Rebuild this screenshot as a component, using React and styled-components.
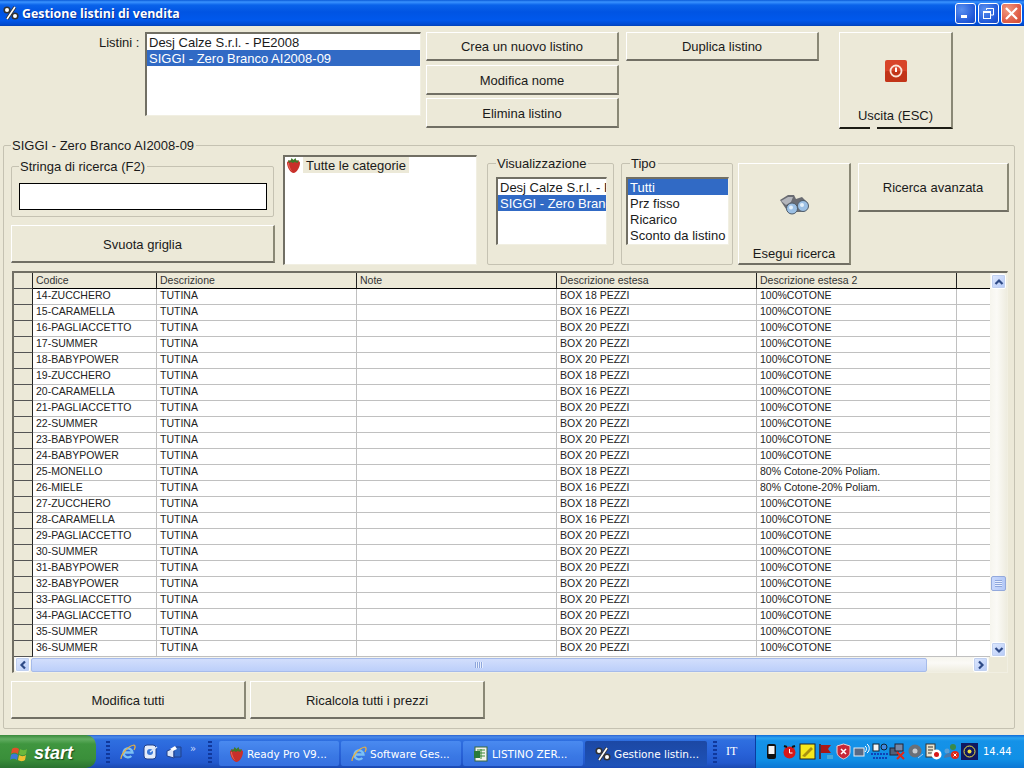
import styled, { createGlobalStyle } from "styled-components";

const GlobalStyle = createGlobalStyle`
  html, body {
    margin: 0;
    background: #ece9d8;
  }
  * {
    box-sizing: border-box;
  }
`;

const Win = styled.div`
  display: flex;
  flex-direction: column;
  width: 1024px;
  height: 768px;
  overflow: hidden;
  background: #ece9d8;
  color: #1a1a1a;
  font-family: "Liberation Sans", Arial, sans-serif;
  font-size: 13px;
`;

const TitleBar = styled.div`
  display: flex;
  align-items: center;
  height: 26px;
  flex: none;
  padding: 0 2px 0 3px;
  background: linear-gradient(
    180deg,
    #0a5ad8 0,
    #3a93ff 2px,
    #0a63ea 5px,
    #0054e3 12px,
    #0058ec 20px,
    #0048cc 25px,
    #0040b0 26px
  );
`;

const TitleText = styled.span`
  margin-left: 3px;
  flex: 1;
  color: #fff;
  font-family: "Open Sans", sans-serif;
  font-size: 12.4px;
  font-weight: 700;
  text-shadow: 1px 1px 0 #0a2f90;
`;

const CaptionButton = styled.div`
  display: flex;
  align-items: center;
  justify-content: center;
  width: 21px;
  height: 21px;
  margin-left: 2px;
  border: 1px solid #fff;
  border-radius: 3px;
  background: ${(p) =>
    p.$close
      ? "radial-gradient(circle at 30% 30%, #f09a80, #e0604a 60%, #d04a30)"
      : "radial-gradient(circle at 30% 30%, #5a90f0, #2058d8 70%, #1848c0)"};
`;

const TopRow = styled.div`
  display: flex;
  flex: none;
  align-items: flex-start;
  height: 112px;
  padding: 6px 0 0 99px;
`;

const TopLabel = styled.div`
  width: 46px;
  margin-top: 1px;
  line-height: 20px;
`;

const ListBox = styled.div`
  flex: none;
  width: ${(p) => p.$w}px;
  height: ${(p) => p.$h}px;
  overflow: hidden;
  background: #fff;
  border-top: 2px solid #716f64;
  border-left: 2px solid #716f64;
  border-right: 1px solid #f1efe2;
  border-bottom: 1px solid #f1efe2;
`;

const ListItem = styled.div`
  height: 16px;
  padding-left: 2px;
  line-height: 18px;
  overflow: hidden;
  white-space: nowrap;
  color: ${(p) => (p.$selected ? "#fff" : "#1a1a1a")};
  background: ${(p) => (p.$selected ? "#316ac5" : "transparent")};
`;

const Button = styled.div`
  position: relative;
  display: flex;
  flex: none;
  align-items: center;
  justify-content: center;
  width: ${(p) => p.$w}px;
  height: ${(p) => p.$h}px;
  margin-top: ${(p) => p.$top || 0}px;
  margin-left: ${(p) => p.$left || 0}px;
  padding-top: ${(p) => (p.$low ? 2 : 0)}px;
  background: #ece9d8;
  border-top: 1px solid #fff;
  border-left: 1px solid #fff;
  border-right: 2px solid #8a8876;
  border-bottom: 2px solid #716f64;
`;

const ButtonColumn = styled.div`
  display: flex;
  flex-direction: column;
  margin: 0 7px 0 5px;
`;

const TallButton = styled(Button)`
  flex-direction: column;
  justify-content: flex-end;
  padding-bottom: ${(p) => p.$bottom}px;
  border-bottom-color: ${(p) => (p.$default ? "#1c1c14" : "#716f64")};
`;

const TallIcon = styled.div`
  display: flex;
  flex: 1;
  align-items: center;
  justify-content: center;
`;

const Notch = styled.span`
  position: absolute;
  left: 30px;
  bottom: -2px;
  width: 7px;
  height: 2px;
  background: #ece9d8;
`;

const Group = styled.fieldset`
  flex: none;
  min-width: 0;
  margin: ${(p) => p.$margin || 0};
  padding: ${(p) => p.$padding || 0};
  height: ${(p) => p.$h}px;
  width: ${(p) => p.$w}px;
  border: 1px solid #c5c2b2;
  border-radius: 2px;
`;

const GroupTitle = styled.legend`
  margin-left: ${(p) => p.$left}px;
  padding: 0 2px 0 1px;
  line-height: 15px;
  height: 15px;
  white-space: nowrap;
`;

const FilterRow = styled.div`
  display: flex;
  height: 110px;
  margin-top: 2px;
`;

const SearchColumn = styled.div`
  display: flex;
  flex: none;
  flex-direction: column;
  width: 264px;
`;

const SearchInput = styled.div`
  width: 248px;
  height: 27px;
  margin-top: 9px;
  background: #fff;
  border: 1px solid #000;
`;

const TreeBox = styled.div`
  flex: none;
  width: 194px;
  height: 110px;
  margin-left: 8px;
  padding-left: 1px;
  background: #fff;
  border-top: 2px solid #716f64;
  border-left: 2px solid #716f64;
  border-right: 1px solid #f1efe2;
  border-bottom: 1px solid #f1efe2;
`;

const TreeItem = styled.div`
  display: flex;
  align-items: center;
  height: 16px;
`;

const TreeLabel = styled.span`
  margin-left: 2px;
  padding: 1px 3px 0;
  height: 16px;
  line-height: 16px;
  background: #ece9d8;
`;

const GridFrame = styled.div`
  display: flex;
  flex-direction: column;
  width: 996px;
  height: 402px;
  margin: 6px 0 0 1px;
  background: #fff;
  border-top: 2px solid #716f64;
  border-left: 2px solid #716f64;
  border-right: 1px solid #f1efe2;
  border-bottom: 1px solid #f1efe2;
`;

const GridBody = styled.div`
  display: flex;
  height: 385px;
`;

const Table = styled.div`
  flex: 1;
  min-width: 0;
  overflow: hidden;
`;

const Row = styled.div`
  display: grid;
  grid-template-columns: 19px 124px 200px 200px 200px 200px 34px;
  height: 16px;
  font-size: 10.5px;
  line-height: 14px;
  color: #222;
`;

const RowMark = styled.div`
  background: #ece9d8;
  border-right: 1px solid #222;
  border-bottom: 1px solid #555;
`;

const HeadCell = styled.div`
  padding-left: 3px;
  background: #ece9d8;
  color: #333;
  white-space: nowrap;
  border-right: 1px solid #222;
  border-bottom: 1px solid #000;
`;

const Cell = styled.div`
  padding-left: 3px;
  line-height: 12px;
  white-space: nowrap;
  overflow: hidden;
  border-right: 1px solid #c0c0c0;
  border-bottom: 1px solid #c0c0c0;
`;

const VScroll = styled.div`
  display: flex;
  flex: none;
  flex-direction: column;
  justify-content: space-between;
  position: relative;
  width: 17px;
  padding-top: 1px;
  background: linear-gradient(90deg, #f6f5ee, #fbfaf6 40%, #eeecdf);
`;

const ScrollArrow = styled.div`
  display: flex;
  flex: none;
  align-items: center;
  justify-content: center;
  width: 15px;
  height: 15px;
  margin: 0 1px;
  background: linear-gradient(135deg, #dfe9fe, #b6caf7);
  border: 1px solid #fff;
  border-radius: 2px;
  box-shadow: 0 0 0 1px #c0d0f0 inset;
`;

const VThumb = styled.div`
  position: absolute;
  top: 303px;
  left: 1px;
  display: flex;
  align-items: center;
  justify-content: center;
  width: 15px;
  height: 15px;
  background: linear-gradient(90deg, #c8d8fc, #b4c8f6);
  border: 1px solid #93a9dc;
  border-radius: 2px;
`;

const VGrip = styled.div`
  width: 7px;
  height: 7px;
  background: repeating-linear-gradient(180deg, #8ea6dc 0 1px, #e6eefe 1px 2px);
`;

const HScroll = styled.div`
  display: flex;
  align-items: center;
  height: 15px;
  margin-top: auto;
  background: linear-gradient(180deg, #f6f5ee, #fbfaf6 40%, #eeecdf);
`;

const HThumb = styled.div`
  display: flex;
  align-items: center;
  justify-content: center;
  width: 896px;
  height: 14px;
  background: linear-gradient(180deg, #d2defc, #bccffa);
  border: 1px solid #a6bbea;
  border-radius: 2px;
`;

const Grip = styled.div`
  width: 8px;
  height: 6px;
  background: repeating-linear-gradient(90deg, #8ea6dc 0 1px, #e6eefe 1px 2px);
`;

const HEnd = styled.div`
  flex: 1;
`;

const Corner = styled.div`
  flex: none;
  width: 18px;
  height: 15px;
  background: #ece9d8;
`;

const BottomRow = styled.div`
  display: flex;
  gap: 4px;
  margin-top: 8px;
`;

const Taskbar = styled.div`
  display: flex;
  flex: none;
  align-items: center;
  height: 33px;
  margin-top: auto;
  color: #fff;
  font-family: "DejaVu Sans", sans-serif;
  font-size: 10.5px;
  background: linear-gradient(
    180deg,
    #2a62d0 0,
    #4a8ae8 2px,
    #2f6fe0 5px,
    #2862d8 18px,
    #2258cc 28px,
    #1a48b0 33px
  );
`;

const StartButton = styled.div`
  display: flex;
  flex: none;
  align-items: center;
  gap: 5px;
  align-self: stretch;
  width: 96px;
  padding: 3px 0 0 10px;
  border-radius: 0 10px 10px 0;
  background: linear-gradient(
    180deg,
    #3a8a3c 0,
    #62ad62 4px,
    #3f963f 9px,
    #3a8f3a 24px,
    #2a7230 33px
  );
`;

const StartText = styled.span`
  color: #fff;
  font-family: "Liberation Sans", sans-serif;
  font-size: 18px;
  font-style: italic;
  font-weight: 700;
  text-shadow: 1px 1px 1px #1c4a1c;
`;

const Dots = styled.div`
  flex: none;
  width: 4px;
  height: 24px;
  margin: ${(p) => p.$margin};
  background: repeating-linear-gradient(180deg, #10389c 0 2px, transparent 2px 4px);
`;

const QuickIcons = styled.div`
  display: flex;
  align-items: center;
  gap: 7px;
  width: 88px;
`;

const Chevron = styled.span`
  margin-left: 1px;
  margin-top: -6px;
  font-size: 10px;
  color: #c8d8fa;
`;

const TaskItem = styled.div`
  display: flex;
  flex: none;
  align-items: center;
  gap: 3px;
  width: ${(p) => p.$w}px;
  height: 25px;
  margin: 3px 2px 0 0;
  padding: 2px 0 0 10px;
  border-radius: 2px;
  white-space: nowrap;
  background: ${(p) =>
    p.$active
      ? "linear-gradient(180deg, #1c48a4, #1e52b8)"
      : "linear-gradient(180deg, #4a8af0, #3a78e4 60%, #3670e0)"};
`;

const Lang = styled.span`
  width: 32px;
  padding-left: 3px;
  font-family: "Liberation Serif", serif;
  font-size: 12px;
`;

const Tray = styled.div`
  display: flex;
  flex: 1;
  align-items: center;
  align-self: stretch;
  padding-left: 7px;
  background: linear-gradient(
    180deg,
    #0f6cd8 0,
    #2aa4f0 3px,
    #1592e8 6px,
    #1090e6 24px,
    #0c76d4 33px
  );
  border-left: 1px solid #0a3ca0;
`;

const TrayIcon = styled.svg`
  flex: none;
  width: 17px;
  height: 17px;
  margin-right: 1px;
`;

const Clock = styled.span`
  margin-left: 4px;
  font-size: 10px;
`;

const PercentIcon = () => (
  <svg width="16" height="16" viewBox="0 0 16 16">
    <path d="M4 14 12 2" stroke="#333" strokeWidth="3.200" />
    <path d="M4 14 12 2" stroke="#fff" strokeWidth="1.600" />
    <circle cx="4" cy="5" r="2.800" fill="#fff" stroke="#333" strokeWidth="1.600" />
    <circle cx="12" cy="11" r="2.800" fill="#fff" stroke="#333" strokeWidth="1.600" />
  </svg>
);

const Strawberry = () => (
  <svg width="15" height="16" viewBox="0 0 15 16">
    <path d="M1 6C1 4 4 3 7.500 3S14 4 14 6c0 4-3.500 10-6.500 10S1 10 1 6Z" fill="#c8302a" />
    <path d="M3 6c0 3 2 7 3.500 8.500C4.500 13.500 2 10 2 6Z" fill="#e8685a" />
    <path d="M2 3l2.500 1L5.500 1l2 2 2-2 1 3L13 3l-1.500 3-3-1-1.500 1-2-1-2 1Z" fill="#3e7a2a" />
  </svg>
);

const PowerIcon = () => (
  <svg width="22" height="22" viewBox="0 0 22 22">
    <rect x="0" y="0" width="22" height="22" rx="2" fill="#d8452a" />
    <rect x="0" y="11" width="22" height="11" rx="2" fill="#c23418" />
    <circle cx="11" cy="11" r="5.500" fill="none" stroke="#fbe4d8" strokeWidth="1.800" />
    <path d="M11 7.500v4.500" stroke="#fff" strokeWidth="2" />
  </svg>
);

const Binoculars = () => (
  <svg width="32" height="22" viewBox="0 0 32 22">
    <path d="M2 6 10 1h6l2 4 6-2 6 6-4 9H10Z" fill="#6a6c72" />
    <path d="M3 7 10 3h5l-2 5-5 3Z" fill="#b4b6bc" />
    <circle cx="14" cy="14.500" r="5.500" fill="#9cc0e4" stroke="#505c68" />
    <circle cx="25" cy="12" r="5.500" fill="#9cc0e4" stroke="#505c68" />
    <circle cx="13" cy="13.500" r="2" fill="#e4f0fa" />
    <circle cx="24" cy="11" r="2" fill="#e4f0fa" />
  </svg>
);

const Arrow = ({ dir }) => {
  const paths = {
    up: "M1.500 7 5 3.500 8.500 7",
    down: "M1.500 3 5 6.500 8.500 3",
    left: "M7 1.500 3.500 5 7 8.500",
    right: "M3 1.500 6.500 5 3 8.500",
  };
  return (
    <svg width="10" height="10" viewBox="0 0 10 10">
      <path d={paths[dir]} fill="none" stroke="#2e4a86" strokeWidth="2.200" />
    </svg>
  );
};

const WinFlag = () => (
  <svg width="19" height="19" viewBox="0 0 19 19">
    <path d="M2 5c3-2 5-1 7 0l-1 5c-2-1-4-2-7 0Z" fill="#e0502a" />
    <path d="M10 5c2 1 4 2 7 0l-1 5c-3 2-5 1-7 0Z" fill="#6ab83c" />
    <path d="M1 11c3-2 5-1 7 0l-1 5c-2-1-4-2-7 0Z" fill="#3c78d8" />
    <path d="M9 11c2 1 4 2 7 0l-1 5c-3 2-5 1-7 0Z" fill="#f0c030" />
  </svg>
);

const IeIcon = () => (
  <svg width="16" height="16" viewBox="0 0 16 16">
    <path d="M4 8.500h8.500A4.500 4.500 0 1 0 11.300 12" fill="none" stroke="#7cc0f4" strokeWidth="2.400" />
    <path d="M1 15C1 10 8 2 14 1c2 1 1 3 0 5" fill="none" stroke="#e8b040" strokeWidth="1.200" />
  </svg>
);

const QuickDesk = () => (
  <svg width="16" height="16" viewBox="0 0 16 16">
    <rect x="1" y="1" width="12" height="14" rx="3" fill="#e4ecfa" stroke="#20408c" />
    <circle cx="7" cy="8" r="3" fill="#3a78d8" />
    <path d="M7 8l7-5" stroke="#d8e4f8" strokeWidth="1.500" />
  </svg>
);

const QuickShow = () => (
  <svg width="16" height="16" viewBox="0 0 16 16">
    <path d="M1 7l7-3v10l-7-2Z" fill="#dce6f8" stroke="#20408c" />
    <path d="M8 3h7v10H8Z" fill="#2f68c8" stroke="#20408c" />
    <path d="M4 5l5-3 2 3-4 2Z" fill="#fff" />
  </svg>
);

const ExcelIcon = () => (
  <svg width="16" height="16" viewBox="0 0 16 16">
    <rect x="2" y="1" width="12" height="14" fill="#f4f4ec" stroke="#3a6a3a" />
    <path d="M4 4h8M4 7h8M4 10h8M8 3v10" stroke="#3a8a3a" />
    <path d="M1 5h6v7H1Z" fill="#2a7a3a" />
  </svg>
);

const trayIcons = [
  <>
    <rect x="4" y="1" width="9" height="15" rx="2" fill="#111" />
    <rect x="5.500" y="3" width="6" height="8" fill="#f4f4f4" />
  </>,
  <>
    <circle cx="8.500" cy="9.500" r="6" fill="#d81818" />
    <path d="M8.500 6v4h3" stroke="#fff" fill="none" />
    <path d="M3 3l3 1M14 3l-3 1" stroke="#111" strokeWidth="2" />
  </>,
  <>
    <rect x="1" y="1" width="15" height="15" fill="#f4e81c" stroke="#222" />
    <path d="M3 13 12 4l2 2-8 8Z" fill="#a89010" />
  </>,
  <>
    <path d="M3 1v15" stroke="#5a1010" strokeWidth="1.500" />
    <path d="M4 2h10l-3 4 3 4H4Z" fill="#a81818" />
    <path d="M10 12h6v4h-6Z" fill="#48a8d8" />
  </>,
  <>
    <path d="M8.500 1 15 3v6c0 4-4 6-6.500 7C6 15 2 13 2 9V3Z" fill="#c82838" stroke="#f0d0d0" />
    <path d="M6 6l5 5M11 6l-5 5" stroke="#fff" strokeWidth="1.500" />
  </>,
  <>
    <rect x="1" y="5" width="10" height="8" fill="#5a6a84" stroke="#e8eef4" />
    <path d="M12 3c2 1 2 4 0 6M14 1c3 2 3 7 0 9" stroke="#fff" fill="none" />
  </>,
  <>
    <rect x="2" y="1" width="6" height="7" fill="#f4f4f4" stroke="#123" />
    <circle cx="13" cy="4" r="3" fill="#4088e0" stroke="#123" />
    <path d="M0 11h17M2 15h14" stroke="#1028a8" strokeWidth="1.500" strokeDasharray="2 1" />
  </>,
  <>
    <rect x="1" y="5" width="8" height="7" fill="#506078" stroke="#223" />
    <rect x="6" y="1" width="8" height="7" fill="#7888a4" stroke="#223" />
    <path d="M8 9l7 7M15 9l-7 7" stroke="#e02818" strokeWidth="2" />
  </>,
  <>
    <circle cx="8" cy="8" r="6.500" fill="#6a7078" />
    <circle cx="8" cy="8" r="2.500" fill="#c8ccd0" />
    <path d="M11 15l5-4" stroke="#a8c8f0" />
  </>,
  <>
    <rect x="1" y="1" width="9" height="13" fill="#e8e4d0" stroke="#333" />
    <path d="M3 4h5M3 7h5M3 10h5" stroke="#333" />
    <circle cx="11.500" cy="11.500" r="5" fill="#fff" />
    <circle cx="11.500" cy="11.500" r="2.500" fill="#d81818" />
  </>,
  <>
    <circle cx="10" cy="4" r="3" fill="#3a8a4a" />
    <circle cx="4" cy="8" r="2.500" fill="#5aa0d8" />
    <path d="M1 15c0-4 4-5 6-5s4 1 4 3" fill="#4a78a8" />
    <circle cx="12" cy="12" r="4" fill="#e02818" />
    <path d="M10.500 10.500l3 3M13.500 10.500l-3 3" stroke="#fff" />
  </>,
  <>
    <rect x="0" y="0" width="17" height="17" fill="#101860" />
    <circle cx="8.500" cy="8.500" r="2" fill="#f0e040" />
    <circle cx="8.500" cy="8.500" r="5.500" fill="none" stroke="#f0e040" />
  </>,
];

const rowData = [
  ["14-ZUCCHERO", 18],
  ["15-CARAMELLA", 16],
  ["16-PAGLIACCETTO", 20],
  ["17-SUMMER", 20],
  ["18-BABYPOWER", 20],
  ["19-ZUCCHERO", 18],
  ["20-CARAMELLA", 16],
  ["21-PAGLIACCETTO", 20],
  ["22-SUMMER", 20],
  ["23-BABYPOWER", 20],
  ["24-BABYPOWER", 20],
  ["25-MONELLO", 18, "80% Cotone-20% Poliam."],
  ["26-MIELE", 16, "80% Cotone-20% Poliam."],
  ["27-ZUCCHERO", 18],
  ["28-CARAMELLA", 16],
  ["29-PAGLIACCETTO", 20],
  ["30-SUMMER", 20],
  ["31-BABYPOWER", 20],
  ["32-BABYPOWER", 20],
  ["33-PAGLIACCETTO", 20],
  ["34-PAGLIACCETTO", 20],
  ["35-SUMMER", 20],
  ["36-SUMMER", 20],
];

const columns = ["Codice", "Descrizione", "Note", "Descrizione estesa", "Descrizione estesa 2", ""];

export default function App() {
  return (
    <Win>
      <GlobalStyle />
      <TitleBar>
        <PercentIcon />
        <TitleText>Gestione listini di vendita</TitleText>
        <CaptionButton>
          <svg width="11" height="11" viewBox="0 0 11 11">
            <rect x="1" y="7" width="6" height="3" fill="#fff" />
          </svg>
        </CaptionButton>
        <CaptionButton>
          <svg width="13" height="13" viewBox="0 0 13 13">
            <path d="M4.500 3V1.500h7V8H9" fill="none" stroke="#fff" />
            <rect x="1.500" y="4.500" width="7" height="7" fill="none" stroke="#fff" />
            <path d="M1.500 5.500h7M4.500 1.500h7" stroke="#fff" />
          </svg>
        </CaptionButton>
        <CaptionButton $close>
          <svg width="15" height="15" viewBox="0 0 15 15">
            <path d="M2 2l11 11M13 2 2 13" stroke="#fff" strokeWidth="2.200" />
          </svg>
        </CaptionButton>
      </TitleBar>

      <TopRow>
        <TopLabel>Listini :</TopLabel>
        <ListBox $w={276} $h={84}>
          <ListItem>Desj Calze S.r.l. - PE2008</ListItem>
          <ListItem $selected>SIGGI - Zero Branco AI2008-09</ListItem>
        </ListBox>
        <ButtonColumn>
          <Button $w={193} $h={29}>Crea un nuovo listino</Button>
          <Button $w={193} $h={30} $top={4} $low>Modifica nome</Button>
          <Button $w={193} $h={30} $top={3} $low>Elimina listino</Button>
        </ButtonColumn>
        <Button $w={193} $h={29}>Duplica listino</Button>
        <TallButton $w={114} $h={97} $left={20} $bottom={4} $default>
          <TallIcon>
            <PowerIcon />
          </TallIcon>
          Uscita (ESC)
          <Notch />
        </TallButton>
      </TopRow>

      <Group $margin="0 3px" $padding="0 7px" $w={1012} $h={591}>
        <GroupTitle $left={0}>SIGGI - Zero Branco AI2008-09</GroupTitle>
        <FilterRow>
          <SearchColumn>
            <Group $margin="4px 0 0" $padding="0 7px" $w={263} $h={58}>
              <GroupTitle $left={0}>Stringa di ricerca (F2)</GroupTitle>
              <SearchInput />
            </Group>
            <Button $w={264} $h={38} $top={8} $low>Svuota griglia</Button>
          </SearchColumn>
          <TreeBox>
            <TreeItem>
              <Strawberry />
              <TreeLabel>Tutte le categorie</TreeLabel>
            </TreeItem>
          </TreeBox>
          <Group $margin="1px 0 0 10px" $padding="6px 7px 0 8px" $w={127} $h={109}>
            <GroupTitle $left={0}>Visualizzazione</GroupTitle>
            <ListBox $w={111} $h={68}>
              <ListItem>Desj Calze S.r.l. - PE2008</ListItem>
              <ListItem $selected>SIGGI - Zero Branco AI2008-09</ListItem>
            </ListBox>
          </Group>
          <Group $margin="1px 0 0 7px" $padding="6px 3px 0 4px" $w={112} $h={109}>
            <GroupTitle $left={4}>Tipo</GroupTitle>
            <ListBox $w={103} $h={68}>
              <ListItem $selected>Tutti</ListItem>
              <ListItem>Prz fisso</ListItem>
              <ListItem>Ricarico</ListItem>
              <ListItem>Sconto da listino</ListItem>
            </ListBox>
          </Group>
          <TallButton $w={113} $h={102} $top={8} $left={5} $bottom={2}>
            <TallIcon>
              <Binoculars />
            </TallIcon>
            Esegui ricerca
          </TallButton>
          <Button $w={151} $h={49} $top={8} $left={7}>Ricerca avanzata</Button>
        </FilterRow>

        <GridFrame>
          <GridBody>
            <Table>
              <Row>
                <RowMark />
                {columns.map((c, i) => (
                  <HeadCell key={i}>{c}</HeadCell>
                ))}
              </Row>
              {rowData.map(([code, pieces, fabric]) => (
                <Row key={code}>
                  <RowMark />
                  <Cell>{code}</Cell>
                  <Cell>TUTINA</Cell>
                  <Cell />
                  <Cell>BOX {pieces} PEZZI</Cell>
                  <Cell>{fabric || "100%COTONE"}</Cell>
                  <Cell />
                </Row>
              ))}
            </Table>
            <VScroll>
              <ScrollArrow>
                <Arrow dir="up" />
              </ScrollArrow>
              <VThumb>
                <VGrip />
              </VThumb>
              <ScrollArrow>
                <Arrow dir="down" />
              </ScrollArrow>
            </VScroll>
          </GridBody>
          <HScroll>
            <ScrollArrow>
              <Arrow dir="left" />
            </ScrollArrow>
            <HThumb>
              <Grip />
            </HThumb>
            <HEnd />
            <ScrollArrow>
              <Arrow dir="right" />
            </ScrollArrow>
            <Corner />
          </HScroll>
        </GridFrame>

        <BottomRow>
          <Button $w={235} $h={38} $low>Modifica tutti</Button>
          <Button $w={235} $h={38} $low>Ricalcola tutti i prezzi</Button>
        </BottomRow>
      </Group>

      <Taskbar>
        <StartButton>
          <WinFlag />
          <StartText>start</StartText>
        </StartButton>
        <Dots $margin="3px 10px 0 10px" />
        <QuickIcons>
          <IeIcon />
          <QuickDesk />
          <QuickShow />
          <Chevron>»</Chevron>
        </QuickIcons>
        <Dots $margin="3px 7px 0 0" />
        <TaskItem $w={120}>
          <Strawberry />
          Ready Pro V9...
        </TaskItem>
        <TaskItem $w={120}>
          <IeIcon />
          Software Ges...
        </TaskItem>
        <TaskItem $w={120}>
          <ExcelIcon />
          LISTINO ZER...
        </TaskItem>
        <TaskItem $w={122} $active>
          <PercentIcon />
          Gestione listin...
        </TaskItem>
        <Dots $margin="3px 6px 0 4px" />
        <Lang>IT</Lang>
        <Tray>
          {trayIcons.map((icon, i) => (
            <TrayIcon key={i} viewBox="0 0 17 17">
              {icon}
            </TrayIcon>
          ))}
          <Clock>14.44</Clock>
        </Tray>
      </Taskbar>
    </Win>
  );
}
